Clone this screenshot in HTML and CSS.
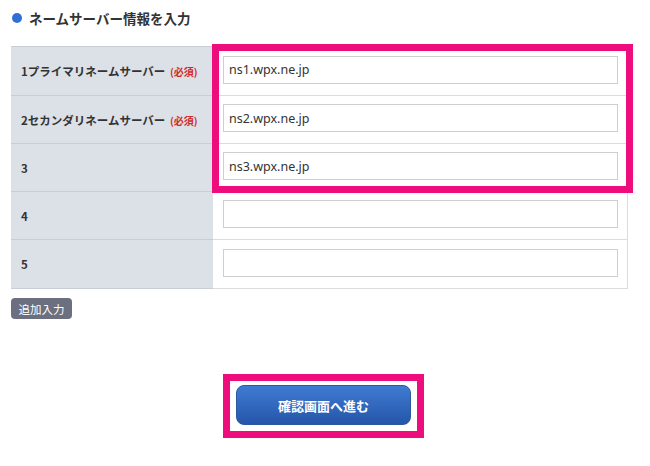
FILE: index.html
```html
<!DOCTYPE html>
<html lang="ja">
<head>
<meta charset="utf-8">
<link rel="stylesheet" href="styles.css">
</head>
<body>
<div class="page">
  <h2 class="title"><span class="dot"></span>ネームサーバー情報を入力</h2>
  <div class="table-wrap">
    <table class="ns-table">
      <tr>
        <th>1プライマリネームサーバー <span class="req">(必須)</span></th>
        <td><input class="field" type="text" value="ns1.wpx.ne.jp"></td>
      </tr>
      <tr>
        <th>2セカンダリネームサーバー <span class="req">(必須)</span></th>
        <td><input class="field" type="text" value="ns2.wpx.ne.jp"></td>
      </tr>
      <tr>
        <th>3</th>
        <td><input class="field" type="text" value="ns3.wpx.ne.jp"></td>
      </tr>
      <tr>
        <th>4</th>
        <td><input class="field" type="text" value=""></td>
      </tr>
      <tr>
        <th>5</th>
        <td><input class="field" type="text" value=""></td>
      </tr>
    </table>
    <div class="highlight"></div>
  </div>
  <button class="add-btn" type="button">追加入力</button>
  <div class="submit-row">
    <div class="submit-frame">
      <button class="submit-btn" type="button">確認画面へ進む</button>
    </div>
  </div>
</div>
</body>
</html>
```
FILE: styles.css
```css
* { box-sizing: border-box; }
html, body { margin: 0; padding: 0; background: #fff; }
body {
  font-family: "Noto Sans CJK JP", "Noto Sans", sans-serif;
  color: #333;
}
.page {
  width: 636px;
  padding: 8px 0 0 11px;
}
.title {
  display: flex;
  align-items: center;
  margin: 0 0 0 1px;
  height: 20px;
  font-size: 13.5px;
  font-weight: bold;
  color: #333;
}
.dot {
  width: 10px;
  height: 10px;
  border-radius: 50%;
  background: #2f6fd6;
  margin-right: 7px;
}
.table-wrap {
  position: relative;
  margin-top: 18px;
  width: 617px;
}
.ns-table {
  width: 617px;
  border-collapse: collapse;
  table-layout: fixed;
}
.ns-table tr { height: 48px; }
.ns-table tr:first-child { height: 49px; }
.ns-table tr:last-child { height: 49px; }
.ns-table th {
  width: 202px;
  background: #dce0e7;
  text-align: left;
  font-size: 11.5px;
  font-weight: bold;
  color: #333;
  padding: 0 0 0 10px;
  border-top: 1px solid #c9cdd4;
  border-bottom: 1px solid #c9cdd4;
  white-space: nowrap;
}
.ns-table td {
  padding: 0 9px 3px 10px;
  border-top: 1px solid #dcdcdc;
  border-bottom: 1px solid #dcdcdc;
  border-right: 1px solid #dcdcdc;
  background: #fff;
}
.req {
  color: #d02a2a;
  font-size: 10px;
  margin-left: 2px;
}
.field {
  display: block;
  width: 100%;
  height: 28px;
  border: 1px solid #cfcfcf;
  padding: 0 5px;
  font-family: "Noto Sans", "DejaVu Sans", sans-serif;
  font-size: 12.5px;
  color: #333;
  background: #fff;
}
.highlight {
  position: absolute;
  left: 201px;
  top: -2px;
  width: 421px;
  height: 149px;
  border: 7px solid #ee0d7c;
  pointer-events: none;
}
.add-btn {
  display: block;
  margin-top: 9px;
  width: 61px;
  height: 21px;
  border: none;
  border-radius: 4px;
  background: #6b6f80;
  color: #fff;
  font-family: "Noto Sans CJK JP", sans-serif;
  font-size: 11.5px;
  padding: 0;
}
.submit-row {
  display: flex;
  justify-content: center;
  margin-top: 55px;
}
.submit-frame {
  border: 7px solid #ee0d7c;
  padding: 4px 6px 6px 6px;
}
.submit-btn {
  display: block;
  width: 175px;
  height: 40px;
  border: 1px solid #2a58a3;
  border-radius: 8px;
  background: linear-gradient(#3f7bd2, #2556a9);
  color: #fff;
  font-family: "Noto Sans CJK JP", sans-serif;
  font-size: 13px;
  font-weight: bold;
}
```
